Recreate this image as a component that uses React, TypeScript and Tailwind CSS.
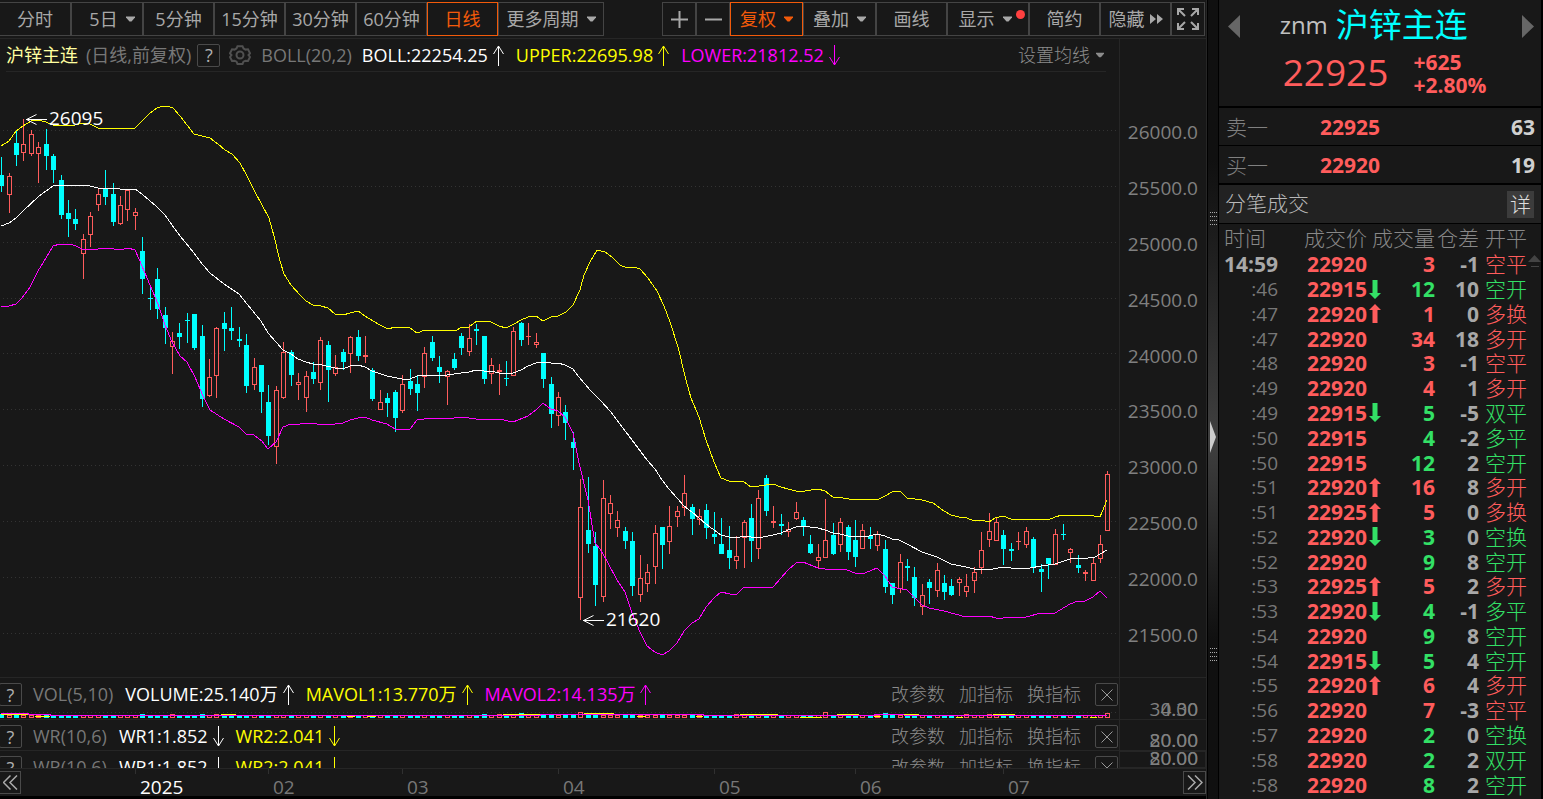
import React from "react";
import clsx from "clsx";

// [rising, high, body top, body bottom, low] in chart units, one per trading day
const CANDLES: number[][] = [
  [0, 157, 175, 186, 192], [1, 173, 176, 195, 213], [0, 130, 143, 155, 166], [1, 119, 144, 153, 161],
  [1, 130, 134, 154, 156], [1, 142, 147, 154, 183], [0, 129, 144, 156, 170], [0, 154, 156, 170, 183],
  [0, 175, 180, 215, 219], [0, 200, 213, 219, 237], [0, 209, 219, 224, 230], [1, 234, 239, 254, 279],
  [1, 212, 216, 235, 247], [1, 189, 194, 205, 211], [0, 170, 189, 197, 205], [0, 183, 194, 222, 226],
  [1, 196, 205, 224, 225], [1, 190, 190, 210, 221], [1, 208, 212, 216, 230], [0, 237, 251, 279, 294],
  [0, 288, 298, 299, 310], [0, 268, 279, 309, 319], [0, 307, 315, 328, 344], [1, 332, 341, 347, 374],
  [0, 323, 333, 337, 349], [0, 313, 320, 321, 343], [0, 314, 314, 348, 350], [0, 325, 336, 399, 407],
  [1, 359, 377, 396, 397], [1, 327, 328, 376, 398], [0, 312, 323, 329, 351], [0, 307, 328, 331, 340],
  [0, 327, 339, 341, 347], [0, 334, 345, 386, 393], [1, 358, 367, 385, 390], [0, 365, 365, 392, 413],
  [0, 385, 402, 436, 445], [1, 386, 390, 447, 464], [1, 342, 352, 398, 399], [0, 350, 352, 375, 386],
  [1, 373, 382, 385, 400], [1, 371, 376, 398, 412], [0, 362, 372, 379, 384], [1, 337, 340, 383, 390],
  [0, 341, 345, 370, 402], [1, 355, 367, 374, 376], [0, 349, 352, 362, 370], [1, 336, 337, 354, 373],
  [0, 330, 337, 356, 361], [1, 336, 355, 357, 363], [0, 368, 370, 399, 401], [1, 390, 402, 410, 410],
  [0, 393, 398, 403, 417], [0, 390, 392, 418, 432], [1, 375, 384, 411, 413], [0, 369, 381, 389, 395],
  [0, 376, 384, 393, 411], [1, 347, 353, 377, 388], [0, 336, 342, 358, 361], [0, 356, 367, 372, 383],
  [1, 370, 371, 377, 405], [0, 353, 359, 368, 370], [0, 333, 336, 348, 355], [1, 324, 338, 352, 356],
  [0, 324, 329, 331, 345], [0, 336, 336, 379, 384], [1, 358, 365, 374, 384], [1, 364, 370, 372, 395],
  [0, 361, 378, 379, 386], [1, 327, 331, 376, 376], [0, 322, 323, 340, 346], [1, 323, 336, 337, 345],
  [1, 333, 342, 345, 348], [0, 353, 353, 379, 388], [0, 377, 384, 414, 428], [1, 392, 397, 416, 426],
  [0, 405, 412, 423, 440], [0, 432, 442, 448, 470], [1, 479, 507, 598, 620], [0, 477, 530, 544, 553],
  [0, 532, 546, 585, 606], [1, 480, 498, 597, 602], [1, 495, 503, 514, 529], [1, 511, 520, 528, 537],
  [0, 527, 531, 541, 549], [0, 532, 541, 586, 596], [1, 555, 578, 595, 602], [1, 564, 572, 584, 592],
  [1, 525, 533, 567, 584], [0, 527, 527, 545, 569], [1, 506, 526, 542, 554], [1, 506, 511, 517, 527],
  [1, 475, 493, 508, 516], [0, 504, 507, 519, 535], [1, 509, 516, 520, 525], [0, 504, 510, 528, 539],
  [0, 512, 534, 537, 544], [0, 518, 544, 554, 554], [0, 526, 550, 558, 569], [1, 536, 556, 561, 569],
  [1, 520, 522, 538, 568], [0, 504, 518, 541, 562], [1, 490, 498, 549, 559], [0, 475, 478, 511, 516],
  [1, 506, 521, 523, 528], [0, 514, 524, 526, 535], [1, 522, 529, 532, 537], [1, 502, 512, 519, 520],
  [0, 517, 520, 526, 536], [0, 535, 544, 553, 554], [1, 544, 557, 561, 568], [1, 499, 540, 558, 558],
  [0, 523, 535, 554, 555], [1, 518, 522, 545, 552], [0, 525, 527, 552, 560], [0, 520, 540, 557, 567],
  [1, 524, 530, 549, 549], [0, 527, 536, 539, 549], [1, 531, 534, 546, 551], [0, 540, 549, 587, 593],
  [0, 583, 583, 595, 604], [1, 554, 562, 589, 593], [0, 559, 566, 568, 581], [0, 567, 577, 598, 606],
  [1, 584, 595, 607, 615], [0, 579, 582, 588, 604], [1, 563, 570, 591, 597], [0, 575, 583, 592, 600],
  [0, 579, 586, 595, 596], [1, 577, 579, 583, 596], [1, 574, 586, 592, 597], [1, 567, 572, 581, 593],
  [1, 532, 550, 568, 574], [1, 513, 531, 540, 547], [1, 518, 522, 541, 541], [0, 530, 535, 549, 565],
  [0, 543, 549, 551, 561], [1, 532, 541, 542, 550], [1, 527, 531, 545, 548], [0, 537, 539, 568, 573],
  [0, 564, 569, 572, 592], [0, 558, 558, 564, 579], [1, 529, 534, 565, 565], [0, 524, 534, 535, 540],
  [1, 548, 549, 553, 563], [0, 555, 565, 568, 573], [1, 570, 572, 574, 581], [1, 558, 563, 581, 581],
  [1, 535, 544, 559, 563], [1, 471, 474, 531, 531],
];

const UPPER =
  "1,146 9,141 16,131 23,126 31,121 38,120 46,122 53,125 75,125 83,123 90,124 98,128 135,128 142,121 150,113 157,108 163,106 167,106 173,108 180,116 187,125 194,134 202,136 210,138 218,144 225,150 232,154 240,163 247,176 254,190 262,205 269,218 274,236 280,261 284,274 291,285 300,295 306,301 313,305 321,306 328,308 335,314 343,315 350,313 358,311 365,316 373,321 380,325 388,329 395,327 410,328 417,333 425,330 455,331 462,327 469,327 477,321 491,322 499,326 506,328 514,324 521,320 528,317 536,316 543,321 551,317 558,316 566,312 573,305 580,290 584,275 590,262 597,250 605,252 612,257 620,265 627,268 634,267 640,269 648,278 657,291 664,306 670,322 678,347 686,380 691,398 699,417 706,440 714,462 721,478 729,481 744,482 751,487 759,486 773,484 781,487 788,489 796,491 805,491 818,489 825,491 833,497 843,498 855,500 860,499 877,500 885,496 892,492 900,491 907,498 922,500 933,503 937,506 944,511 951,515 959,517 967,518 974,521 981,520 989,522 995,518 1003,516 1011,519 1018,520 1025,519 1041,519 1048,520 1055,517 1062,515 1073,515 1088,515 1100,517 1107,500";
const MIDDLE =
  "1,226 9,223 16,218 23,211 38,197 46,191 53,186 60,185 78,185 90,186 98,188 112,188 120,189 135,189 142,194 157,207 165,215 172,225 180,236 190,248 203,265 210,273 224,284 239,294 247,304 261,321 268,333 276,342 283,350 291,354 298,359 306,362 313,364 322,365 335,368 343,369 350,366 358,365 365,367 372,371 387,376 402,379 410,379 417,376 424,375 447,375 454,374 469,372 476,370 484,371 491,371 499,373 506,374 513,373 521,370 528,366 536,363 543,362 551,363 558,363 565,365 573,369 579,377 590,390 600,400 611,412 626,432 647,460 655,469 662,480 669,489 677,498 684,506 692,512 699,518 706,524 714,530 721,535 729,537 736,538 744,536 751,537 763,537 773,535 781,533 788,530 796,527 803,526 810,527 818,528 825,530 833,533 840,534 848,536 865,537 877,534 885,536 892,539 899,540 907,544 922,552 937,557 951,564 966,567 974,569 993,569 1003,567 1011,568 1030,568 1041,566 1055,564 1070,559 1088,558 1095,557 1100,554 1107,550";
const LOWER =
  "1,307 9,306 16,304 22,298 30,287 38,271 46,258 53,246 60,244 70,244 76,246 84,250 98,249 107,248 120,250 128,248 135,250 139,259 150,285 158,304 165,325 172,342 180,356 187,362 195,377 203,396 210,410 224,419 239,427 246,434 254,435 262,441 268,449 276,442 283,427 291,424 300,424 306,423 328,425 335,424 343,423 350,420 358,418 365,417 372,420 387,424 395,429 402,430 410,429 417,420 424,419 454,418 461,417 484,420 499,419 513,422 528,416 536,410 543,403 551,409 558,411 565,417 573,433 579,463 588,500 595,543 600,549 607,561 617,580 625,592 632,613 640,632 647,646 655,652 662,655 669,651 677,643 684,631 692,623 699,619 706,607 714,598 721,592 730,594 736,595 744,587 773,587 788,570 796,563 803,562 818,568 825,569 847,570 855,573 865,573 877,568 885,576 892,587 907,590 914,597 922,605 929,608 944,611 966,617 989,616 996,618 1003,618 1008,617 1026,617 1041,613 1055,613 1070,604 1078,601 1085,601 1093,597 1100,591 1107,598";

const GRID = [130, 186, 242, 298, 353, 409, 465, 521, 577, 633];
const PRICES = ["26000.0", "25500.0", "25000.0", "24500.0", "24000.0", "23500.0", "23000.0", "22500.0", "22000.0", "21500.0"];
const MONTHS = ["2025", "02", "03", "04", "05", "06", "07"];

// days whose volume bar is taller than the usual one
const TALL: Record<number, number> = { 0: 4, 19: 4, 23: 4, 27: 4, 29: 4, 65: 4, 67: 4, 70: 5, 78: 6, 99: 4, 101: 4, 111: 6, 119: 5, 120: 4, 130: 4, 133: 4, 149: 5 };
const VOL_YELLOW = [[1, 28, 1], [35, 50, 3], [221, 236, 1], [347, 355, 3], [367, 376, 3], [503, 540, 1], [584, 614, 0], [637, 646, 3], [696, 703, 3], [740, 778, 1], [800, 822, 4], [837, 859, 1], [874, 881, 3], [904, 919, 1], [956, 963, 4], [993, 1015, 1], [1090, 1097, 4]];

// [time, price, direction, volume, position change, kind]; buy side is red
type Trade = [string, string, "" | "up" | "down", string, string, string, boolean];
const TRADES: Trade[] = [
  ["14:59", "22920", "", "3", "-1", "空平", true],
  [":46", "22915", "down", "12", "10", "空开", false],
  [":47", "22920", "up", "1", "0", "多换", true],
  [":47", "22920", "", "34", "18", "多开", true],
  [":48", "22920", "", "3", "-1", "空平", true],
  [":49", "22920", "", "4", "1", "多开", true],
  [":49", "22915", "down", "5", "-5", "双平", false],
  [":50", "22915", "", "4", "-2", "多平", false],
  [":50", "22915", "", "12", "2", "空开", false],
  [":51", "22920", "up", "16", "8", "多开", true],
  [":51", "22925", "up", "5", "0", "多换", true],
  [":52", "22920", "down", "3", "0", "空换", false],
  [":52", "22920", "", "9", "8", "空开", false],
  [":53", "22925", "up", "5", "2", "多开", true],
  [":53", "22920", "down", "4", "-1", "多平", false],
  [":54", "22920", "", "9", "8", "空开", false],
  [":54", "22915", "down", "5", "4", "空开", false],
  [":55", "22920", "up", "6", "4", "多开", true],
  [":56", "22920", "", "7", "-3", "空平", true],
  [":57", "22920", "", "2", "0", "空换", false],
  [":58", "22920", "", "2", "2", "双开", false],
  [":58", "22920", "", "8", "2", "空开", false],
];

const candleX = (i: number) => Math.floor(1.7 + 7.424 * i);

function Caret({ small = false }: { small?: boolean }) {
  return (
    <svg width={small ? 8 : 9} height="6" viewBox="0 0 9 6" fill="currentColor" className="shrink-0">
      <path d="M0 0.5h9v1L5.5 5.5h-2L0 1.5z" />
    </svg>
  );
}

function TrendArrow({ down = false }: { down?: boolean }) {
  return (
    <svg width="11" height="21" viewBox="0 0 11 21" fill="none" stroke="currentColor" className="shrink-0">
      {down ? <path d="M5.5 0v20M0.5 12l5 8 5-8" /> : <path d="M5.5 21V1M0.5 9l5-8 5 8" />}
    </svg>
  );
}

function ToolButton({ children, className, active }: { children: React.ReactNode; className: string; active?: boolean }) {
  return (
    <button
      className={clsx(
        "flex h-[34px] shrink-0 items-center justify-center border text-[18px] whitespace-nowrap",
        active ? "border-[#f25a0a] text-[#f25a0a]" : "border-[#444] text-[#a8a8a8]",
        className
      )}
    >
      {children}
    </button>
  );
}

function HelpButton({ className }: { className?: string }) {
  return (
    <button aria-label="?" className={clsx("flex h-[23px] w-[23px] shrink-0 items-center justify-center rounded-xs border border-[#4a4a4a] text-[18px] leading-5 text-[#b0b0b0]", className)}>
      ?
    </button>
  );
}

function IndicatorHeader({ children }: { children: React.ReactNode }) {
  return (
    <div className="flex h-[33px] items-start overflow-hidden pt-[5px] pr-px">
      <HelpButton className="-ml-px" />
      <div className="flex h-[23px] flex-1 items-center pl-[11px] text-[18px] whitespace-nowrap">{children}</div>
      <div className="flex h-[23px] items-center gap-[14px] text-[18px] font-light text-[#8c8c8c]">
        <button>改参数</button>
        <button>加指标</button>
        <button>换指标</button>
        <button aria-label="关闭" className="flex h-[23px] w-[23px] items-center justify-center rounded-xs border border-[#4a4a4a]">
          <svg width="12" height="12" viewBox="0 0 12 12" stroke="#999" fill="none">
            <path d="M0.5 0.5l11 11M11.5 0.5l-11 11" />
          </svg>
        </button>
      </div>
    </div>
  );
}

function WrHeader() {
  return (
    <IndicatorHeader>
      <span className="text-[#777]">WR(10,6)</span>
      <span className="ml-3 text-white">WR1:1.852</span>
      <span className="ml-[5px] text-white"><TrendArrow down /></span>
      <span className="ml-3 text-[#ff0]">WR2:2.041</span>
      <span className="ml-[5px] text-[#ff0]"><TrendArrow down /></span>
    </IndicatorHeader>
  );
}

// two scale values drawn on top of each other, as the collapsed pane does
function OverlapLabel({ a, b, className }: { a: string; b: string; className?: string }) {
  return (
    <span className={clsx("relative block text-right text-[19px] leading-5 text-[#808080]", className)}>
      {a}
      <span className="absolute top-0 right-0">{b}</span>
    </span>
  );
}

function PriceChart() {
  return (
    <svg viewBox="0 72 1119 605" preserveAspectRatio="none" className="block h-full w-full">
      <g shapeRendering="crispEdges">
        {GRID.map((y) => (
          <line key={y} x1="3" x2="1119" y1={y + 0.5} y2={y + 0.5} stroke="#333" strokeDasharray="1 3" />
        ))}
        {CANDLES.map(([up, high, top, bottom, low], i) => {
          const x = candleX(i);
          const color = up ? "#ff5c5c" : "#00ffff";
          const hollow = up && bottom - top > 2;
          return (
            <g key={i} fill={color}>
              {top > high && <rect x={x} y={high} width="1" height={top - high} />}
              {low > bottom && <rect x={x} y={bottom} width="1" height={low - bottom} />}
              {hollow ? (
                <rect x={x - 1.5} y={top + 0.5} width="4" height={bottom - top - 1} fill="none" stroke={color} />
              ) : (
                <rect x={x - 2} y={top} width="5" height={bottom - top} />
              )}
            </g>
          );
        })}
        <g fill="none" strokeWidth="1">
          <polyline points={UPPER} stroke="#ffff00" />
          <polyline points={MIDDLE} stroke="#ffffff" />
          <polyline points={LOWER} stroke="#ff00ff" />
        </g>
      </g>
      <g stroke="#fff" fill="none">
        <path d="M26 119.5h21M36.5 114.5l-10 5 10 5" />
        <path d="M583 620.5h21M593.5 615.5l-10 5 10 5" />
      </g>
      <g fill="#fff" fontSize="19">
        <text x="49" y="125">26095</text>
        <text x="606" y="626">21620</text>
      </g>
    </svg>
  );
}

function VolumeChart() {
  return (
    <svg viewBox="0 0 1119 7" preserveAspectRatio="none" className="block h-[7px] w-full" shapeRendering="crispEdges">
      <line x1="3" x2="1119" y1="0.5" y2="0.5" stroke="#333" strokeDasharray="1 3" />
      {CANDLES.map(([up], i) => {
        const x = candleX(i);
        const h = TALL[i] ?? 3;
        return up ? (
          <rect key={i} x={x - 1.5} y={6.5 - h} width="4" height={h - 1} fill="none" stroke="#ff5c5c" />
        ) : (
          <rect key={i} x={x - 2} y={6 - h} width="5" height={h} fill="#00ffff" />
        );
      })}
      <polyline points="1,1.5 28,1.5 28,2.5 50,2.5 50,3.5 540,3.5 540,2.5 703,2.5 703,3.5 874,3.5 874,2.5 904,2.5 904,3.5 1107,3.5" fill="none" stroke="#ff00ff" />
      {VOL_YELLOW.map(([a, b, y]) => (
        <line key={a} x1={a} x2={b} y1={y + 1.5} y2={y + 1.5} stroke="#ffff00" />
      ))}
    </svg>
  );
}

function Toolbar() {
  return (
    <div className="flex h-[38px] items-start justify-between pt-[2px] pr-px">
      <div className="flex">
        <ToolButton className="w-[71px] border-l-0">分时</ToolButton>
        <ToolButton className="w-[72px] gap-2 pl-[10px]">5日 <Caret /></ToolButton>
        <ToolButton className="w-[71px]">5分钟</ToolButton>
        <ToolButton className="w-[71px]">15分钟</ToolButton>
        <ToolButton className="w-[71px]">30分钟</ToolButton>
        <ToolButton className="w-[71px]">60分钟</ToolButton>
        <ToolButton className="w-[71px]" active>日线</ToolButton>
        <ToolButton className="w-[106px] gap-2">更多周期 <Caret /></ToolButton>
      </div>
      <div className="flex">
        <ToolButton className="w-[34px]">
          <svg width="17" height="17" viewBox="0 0 17 17" fill="currentColor" aria-label="放大">
            <path d="M7.5 0h2v7.5H17v2H9.500V17h-2V9.500H0v-2h7.500z" />
          </svg>
        </ToolButton>
        <ToolButton className="w-[34px]">
          <svg width="17" height="17" viewBox="0 0 17 17" fill="currentColor" aria-label="缩小">
            <path d="M0 7.500h17v2H0z" />
          </svg>
        </ToolButton>
        <ToolButton className="w-[73px] gap-2" active>复权 <Caret /></ToolButton>
        <ToolButton className="w-[73px] gap-2">叠加 <Caret /></ToolButton>
        <ToolButton className="w-[71px]">画线</ToolButton>
        <ToolButton className="relative w-[82px] gap-2 pr-[6px]">
          显示 <Caret />
          <span className="absolute top-[7px] right-[3px] size-[9px] rounded-full bg-[#ff4040]" />
        </ToolButton>
        <ToolButton className="w-[71px]">简约</ToolButton>
        <ToolButton className="w-[71px] gap-[5px]">
          隐藏
          <svg width="13" height="10" viewBox="0 0 13 10" fill="currentColor"><path d="M0 0l6 5-6 5zM7 0l6 5-6 5z" /></svg>
        </ToolButton>
        <ToolButton className="w-[34px]">
          <svg width="22" height="22" viewBox="0 0 22 22" fill="none" stroke="currentColor" strokeWidth="2" aria-label="全屏">
            <path d="M1 7V1h6M15 1h6v6M21 15v6h-6M7 21H1v-6M1 1l7 7M21 1l-7 7M21 21l-7-7M1 21l7-7" />
          </svg>
        </ToolButton>
      </div>
    </div>
  );
}

function InfoBar() {
  return (
    <div className="mr-[13px] ml-[6px] flex h-[33px] items-center border-b border-[#262626] text-[18px] whitespace-nowrap">
      <span className="text-[#ffffa0]">沪锌主连</span>
      <span className="ml-2 text-[#777]">(日线,前复权)</span>
      <HelpButton className="ml-[6px]" />
      <svg width="22" height="22" viewBox="0 0 22 22" fill="none" stroke="#505050" strokeWidth="2" className="ml-[9px] shrink-0">
        <path d="M8.500 2.200h5l1 2.300 2 1.100 2.500-.3 2 4-1.500 1.700 1.500 2-2 4-2.500-.3-2 1-1 2.300h-5l-1-2.300-2-1-2.500.3-2-4 1.500-2-1.500-1.700 2-4 2.500.3 2-1.100z" />
        <circle cx="11" cy="11" r="3.500" />
      </svg>
      <span className="ml-[10px] text-[#777]">BOLL(20,2)</span>
      <span className="ml-[10px] text-white">BOLL:22254.25</span>
      <span className="ml-[5px] text-white"><TrendArrow /></span>
      <span className="ml-3 text-[#ff0]">UPPER:22695.98</span>
      <span className="ml-[5px] text-[#ff0]"><TrendArrow /></span>
      <span className="ml-3 text-[#f0f]">LOWER:21812.52</span>
      <span className="ml-[5px] text-[#f0f]"><TrendArrow down /></span>
      <button className="ml-auto flex items-center gap-[6px] pr-[2px] font-light text-[#8c8c8c]">
        设置均线 <Caret small />
      </button>
    </div>
  );
}

function TimeAxis() {
  return (
    <div className="flex h-[31px] shrink-0 border-t border-b-[3px] border-[#262626] border-b-black">
      <button aria-label="向左" className="mt-[2px] flex h-[23px] w-[21px] items-center justify-center border border-l-0 border-[#4a4a4a]">
        <svg width="15" height="15" viewBox="0 0 15 15" fill="none" stroke="#aaa" strokeWidth="1.500"><path d="M7.500 0.500l-7 7 7 7M14 0.500l-7 7 7 7" /></svg>
      </button>
      <div className="grid min-w-0 flex-1 grid-cols-[114fr_133fr_134fr_156fr_156fr_141fr_148fr_180fr] text-[19px] leading-9 text-[#777]">
        <span />
        {MONTHS.map((m, i) => (
          <span key={m} className={clsx("flex h-[5px] border-l border-[#303030] pl-1", i === 0 && "text-white")}>{m}</span>
        ))}
      </div>
      <button aria-label="向右" className="mt-[2px] flex h-[23px] w-[23px] items-center justify-center border border-[#4a4a4a]">
        <svg width="16" height="15" viewBox="0 0 16 15" fill="none" stroke="#aaa" strokeWidth="1.500"><path d="M1 0.500l7 7-7 7M8 0.500l7 7-7 7" /></svg>
      </button>
    </div>
  );
}

function Grip() {
  return (
    <svg width="7" height="13" viewBox="0 0 7 13" stroke="#aaa" strokeDasharray="1 1" shapeRendering="crispEdges">
      <path d="M0 0.500h7M0 4.500h7M0 8.500h7M0 12.500h7" />
    </svg>
  );
}

function Splitter() {
  return (
    <div className="flex w-3 shrink-0 flex-col items-center justify-between border-x border-black bg-linear-to-b from-[#101010] from-20% via-[#404040] via-55% to-[#101010] to-80% pt-[212px] pb-[138px]">
      <Grip />
      <svg width="6" height="32" viewBox="0 0 6 32" fill="#ccc"><path d="M0 0l6 16-6 16z" /></svg>
      <Grip />
    </div>
  );
}

function QuoteRow({ label, price, amount }: { label: string; price: string; amount: string }) {
  return (
    <div className="flex h-[37px] items-center pr-[6px] pl-[7px] text-[21px] leading-6">
      <span className="w-[94px] font-light text-[#808080]">{label}</span>
      <span className="flex-1 font-bold text-[#ff5c5c]">{price}</span>
      <span className="font-bold text-[#d0d0d0]">{amount}</span>
    </div>
  );
}

function QuotePanel() {
  return (
    <aside className="flex w-[324px] shrink-0 flex-col border-r-2 border-black">
      <div className="flex h-[106px] shrink-0 items-start justify-between pr-[7px] pl-[9px]">
        <button aria-label="上一个" className="mt-[15px]">
          <svg width="12" height="23" viewBox="0 0 12 23" fill="#666"><path d="M12 0v23L0 11.500z" /></svg>
        </button>
        <div className="flex flex-col pl-1">
          <div className="flex h-[50px] items-center gap-2">
            <span className="text-[24px] text-[#c0c0c0]">znm</span>
            <span className="text-[33px] text-[#00ffff]">沪锌主连</span>
          </div>
          <div className="flex h-[48px] items-center pl-[3px] text-[#ff5c5c]">
            <span className="pb-[5px] text-[37px] leading-[43px] font-medium">22925</span>
            <div className="ml-[25px] flex flex-col text-[21px] leading-[23px] font-bold">
              <span>+625</span>
              <span>+2.80%</span>
            </div>
          </div>
        </div>
        <button aria-label="下一个" className="mt-[15px]">
          <svg width="12" height="23" viewBox="0 0 12 23" fill="#666"><path d="M0 0v23l12-11.500z" /></svg>
        </button>
      </div>
      <div className="border-y-2 border-black">
        <QuoteRow label="卖一" price="22925" amount="63" />
        <div className="h-px bg-black" />
        <QuoteRow label="买一" price="22920" amount="19" />
      </div>
      <div className="flex h-[39px] shrink-0 items-center justify-between border-b border-black bg-[#222] pr-[7px] pl-[6px] text-[21px] text-[#b8b8b8]">
        <h2 className="font-light">分笔成交</h2>
        <button className="h-[27px] w-[27px] bg-[#3c3c3c] leading-[27px] font-light text-[#ddd]">详</button>
      </div>
      <div className="relative min-h-0 flex-1 pb-0.5">
        <table className="h-full w-full table-fixed border-collapse text-right text-[21px] leading-6 whitespace-nowrap">
          <colgroup>
            <col className="w-[59px]" />
            <col className="w-[89px]" />
            <col className="w-[16px]" />
            <col className="w-[52px]" />
            <col className="w-[44px]" />
            <col />
          </colgroup>
          <thead>
            <tr className="h-[28px] text-[#888]">
              <th className="p-0 pl-[5px] text-left font-light">时间</th>
              <th className="p-0 font-light">成交价</th>
              <th className="p-0 font-light" colSpan={2}>成交量</th>
              <th className="p-0 font-light">仓差</th>
              <th className="p-0 pl-[6px] text-left font-light">开平</th>
            </tr>
          </thead>
          <tbody>
            {TRADES.map(([time, price, dir, vol, diff, kind, red], i) => (
              <tr key={i}>
                <td className={clsx("p-0", i === 0 ? "font-bold text-[#a8a8a8]" : "text-[19px] text-[#777]")}>{time}</td>
                <td className="p-0 font-bold text-[#ff5c5c]">{price}</td>
                <td className="p-0 pl-[2px]">
                  {dir && (
                    <svg width="12" height="19" viewBox="0 0 12 19" fill={dir === "up" ? "#ff5c5c" : "#33e066"}>
                      {dir === "up" ? <path d="M6 0l6 6H8.500v13h-5V6H0z" /> : <path d="M6 19l6-6H8.500V0h-5v13H0z" />}
                    </svg>
                  )}
                </td>
                <td className={clsx("p-0 font-bold", red ? "text-[#ff5c5c]" : "text-[#33e066]")}>{vol}</td>
                <td className="p-0 font-bold text-[#a8a8a8]">{diff}</td>
                <td className={clsx("p-0 pl-[6px] text-left font-light", red ? "text-[#ff5c5c]" : "text-[#33e066]")}>{kind}</td>
              </tr>
            ))}
          </tbody>
        </table>
        <svg width="13" height="12" viewBox="0 0 13 12" fill="#444" className="absolute top-[31px] right-0">
          <path d="M6.500 0l6.500 7H0zM3 11h8v1H3z" />
        </svg>
      </div>
    </aside>
  );
}

export default function App() {
  return (
    <div className="flex h-screen w-full overflow-hidden bg-[#181818] font-['Open_Sans','Noto_Sans_CJK_SC',sans-serif]">
      <main className="flex min-w-0 flex-1 flex-col border-r border-[#262626]">
        <Toolbar />
        <div className="flex min-h-0 flex-1 border-t border-[#262626]">
          <div className="flex min-w-0 flex-1 flex-col">
            <InfoBar />
            <div className="min-h-0 flex-1">
              <PriceChart />
            </div>
          </div>
          <div className="flex w-[87px] shrink-0 flex-col justify-between border-l border-[#262626] pt-[79px] pr-2 pb-[28px] text-right text-[19px] leading-7 text-[#808080]">
            {PRICES.map((p) => (
              <span key={p}>{p}</span>
            ))}
          </div>
        </div>
        <div className="flex h-[42px] shrink-0 border-t border-[#262626]">
          <div className="flex min-w-0 flex-1 flex-col justify-between">
            <IndicatorHeader>
              <span className="text-[#777]">VOL(5,10)</span>
              <span className="ml-3 text-white">VOLUME:25.140万</span>
              <span className="ml-[5px] text-white"><TrendArrow /></span>
              <span className="ml-3 text-[#ff0]">MAVOL1:13.770万</span>
              <span className="ml-[5px] text-[#ff0]"><TrendArrow /></span>
              <span className="ml-3 text-[#f0f]">MAVOL2:14.135万</span>
              <span className="ml-[5px] text-[#f0f]"><TrendArrow /></span>
            </IndicatorHeader>
            <VolumeChart />
          </div>
          <div className="w-[87px] shrink-0 border-l border-[#262626] pt-[21px] pr-2">
            <OverlapLabel a="30.00" b="4.30" />
          </div>
        </div>
        <div className="flex h-[31px] shrink-0 overflow-hidden border-t border-[#262626]">
          <div className="min-w-0 flex-1"><WrHeader /></div>
          <div className="w-[87px] shrink-0 border-l border-[#262626] pt-[10px] pr-2">
            <OverlapLabel a="80.00" b="20.00" />
          </div>
        </div>
        <div className="flex h-[18px] shrink-0 overflow-hidden border-t border-[#262626]">
          <div className="min-w-0 flex-1"><WrHeader /></div>
          <div className="w-[87px] shrink-0 overflow-hidden border border-[#262626] pr-[7px]">
            <OverlapLabel a="80.00" b="20.00" className="-mt-1" />
          </div>
        </div>
        <TimeAxis />
      </main>
      <Splitter />
      <QuotePanel />
    </div>
  );
}
